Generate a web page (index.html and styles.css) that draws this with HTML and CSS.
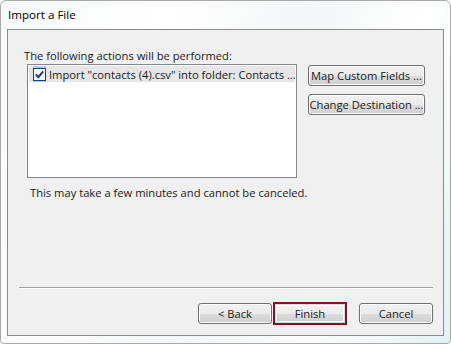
FILE: index.html
```html
<!DOCTYPE html>
<html>
<head>
    <title>Import a File</title>
    <link rel="stylesheet" href="styles.css">
</head>
<body>
    <div class="window">
        <div class="titlebar">Import a File</div>
        <div class="client">
            <div class="main">
                <p class="intro">The following actions will be performed:</p>
                <div class="row">
                    <div class="listbox">
                        <div class="item">
                            <span class="check">
                                <svg width="13" height="13" viewBox="0 0 13 13">
                                    <rect x="0.5" y="0.5" width="12" height="12" fill="#f4f6f8" stroke="#1c3e6e"/>
                                    <path d="M2.8 6.4 L5.3 9.2 L10.2 3.4" fill="none" stroke="#1c3e6e" stroke-width="2"/>
                                </svg>
                            </span>
                            <span>Import "contacts (4).csv" into folder: Contacts ...</span>
                        </div>
                    </div>
                    <div class="side">
                        <button class="btn side-btn">Map Custom Fields ...</button>
                        <button class="btn side-btn">Change Destination ...</button>
                    </div>
                </div>
                <p class="note">This may take a few minutes and cannot be canceled.</p>
            </div>
            <div class="footer">
                <div class="separator"></div>
                <div class="buttons">
                    <button class="btn nav-btn">&lt; Back</button>
                    <span class="default-frame"><button class="btn nav-btn">Finish</button></span>
                    <button class="btn nav-btn cancel">Cancel</button>
                </div>
            </div>
        </div>
    </div>
</body>
</html>
```

FILE: styles.css
```css
html, body {
    margin: 0;
    padding: 0;
}
body {
    font-family: "Open Sans", "Noto Sans", sans-serif;
    font-size: 11.2px;
    color: #1a1a1a;
    background: #ffffff;
}
.window {
    box-sizing: border-box;
    width: 451px;
    height: 344px;
    border: 1px solid #a9a9a9;
    border-radius: 6px 6px 4px 4px;
    background: linear-gradient(110deg, #f7f9fa 0%, #ffffff 30%, #f4f6f7 55%, #ffffff 75%, #e4f1f2 100%);
    padding: 0 6px 7px 6px;
    display: flex;
    flex-direction: column;
}
.titlebar {
    height: 28px;
    line-height: 27px;
    padding-left: 1px;
    font-size: 11.6px;
    color: #000;
}
.client {
    flex: 1;
    border: 1px solid #8a8a8a;
    background: #f0f0f0;
    display: flex;
    flex-direction: column;
}
.main {
    flex: 1;
    padding: 18px 0 0 16px;
}
.intro {
    margin: 0;
    line-height: 16px;
}
.row {
    display: flex;
    margin-left: 3px;
}
.listbox {
    box-sizing: border-box;
    width: 270px;
    height: 114px;
    background: #fff;
    border: 1px solid #828790;
    padding: 1px;
}
.item {
    display: flex;
    align-items: center;
    height: 16px;
    background: #e6e6e6;
    padding-left: 4px;
    gap: 3px;
    white-space: nowrap;
    overflow: hidden;
}
.check {
    display: flex;
    align-items: center;
    justify-content: center;
    width: 16px;
    height: 16px;
    background: #a8d2f4;
}
.check svg {
    display: block;
}
.side {
    display: flex;
    flex-direction: column;
    gap: 8px;
    margin-left: 11px;
    margin-top: 1px;
}
.btn {
    font-family: inherit;
    font-size: 11.2px;
    color: #1a1a1a;
    border: 1px solid #707070;
    border-radius: 3px;
    background: linear-gradient(#f2f2f2 0%, #ebebeb 50%, #dddddd 51%, #cfcfcf 100%);
    box-shadow: inset 0 0 0 1px #fcfcfc;
    padding: 0;
    height: 21px;
    white-space: nowrap;
    cursor: pointer;
}
.side-btn {
    width: 117px;
}
.note {
    margin: 7px 0 0 6px;
    line-height: 16px;
}
.footer {
    padding: 0 10px 10px 11px;
}
.separator {
    height: 1px;
    background: #a0a0a0;
    border-bottom: 1px solid #fbfbfb;
}
.buttons {
    display: flex;
    justify-content: flex-end;
    align-items: center;
    margin-top: 13px;
}
.nav-btn {
    width: 74px;
}
.default-frame {
    display: flex;
    border: 2px solid #7b1526;
    margin-left: 1px;
}
.default-frame .nav-btn {
    height: 19px;
    width: 70px;
    border: 1px solid #dcdcdc;
    border-radius: 0;
}
.cancel {
    margin-left: 12px;
}
```
